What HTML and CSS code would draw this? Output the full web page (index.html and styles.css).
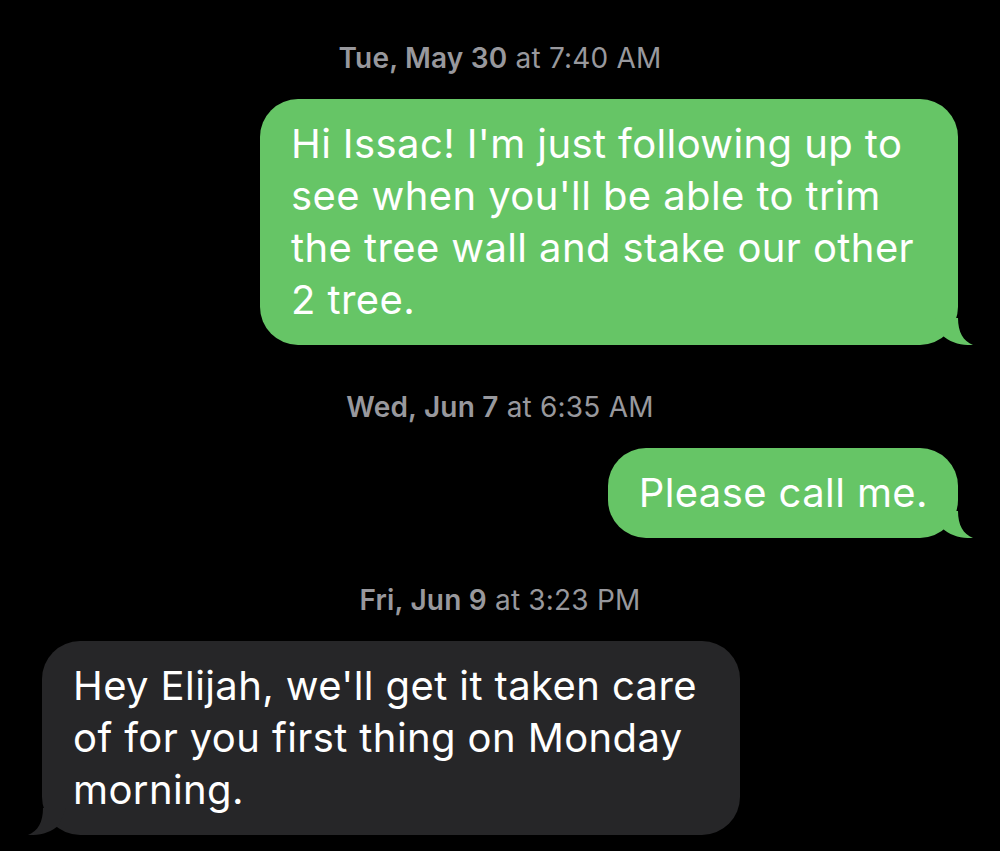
FILE: index.html
```html
<!DOCTYPE html>
<html lang="en">
<head>
    <meta charset="UTF-8">
    <title>Messages</title>
    <link rel="stylesheet" href="styles.css">
</head>
<body>

    <div class="chat">

        <div class="stamp"><b>Tue, May 30</b> at 7:40 AM</div>
        <div class="bubble sent wide">
            Hi Issac! I'm just following up to<br>
            see when you'll be able to trim<br>
            the tree wall and stake our other<br>
            2 tree.
            <svg class="tail" viewBox="0 0 39 27"><path d="M24 0 C24 14 29 23 39 27 C28 27.5 16 25 8 17 L1 0 Z"/></svg>
        </div>

        <div class="stamp"><b>Wed, Jun 7</b> at 6:35 AM</div>
        <div class="bubble sent">
            Please call me.
            <svg class="tail" viewBox="0 0 39 27"><path d="M24 0 C24 14 29 23 39 27 C28 27.5 16 25 8 17 L1 0 Z"/></svg>
        </div>

        <div class="stamp"><b>Fri, Jun 9</b> at 3:23 PM</div>
        <div class="bubble received wide">
            Hey Elijah, we'll get it taken care<br>
            of for you first thing on Monday<br>
            morning.
            <svg class="tail" viewBox="0 0 39 27"><path d="M24 0 C24 14 29 23 39 27 C28 27.5 16 25 8 17 L1 0 Z"/></svg>
        </div>

    </div>

</body>
</html>
```
FILE: styles.css
```css
* {
    margin: 0;
    padding: 0;
    box-sizing: border-box;
}

body {
    background: #000;
    font-family: Inter, "Liberation Sans", sans-serif;
    color: #fff;
}

.chat {
    display: flex;
    flex-direction: column;
    padding: 42px 42px 0 42px;
}

.stamp {
    align-self: center;
    font-size: 28px;
    line-height: 32px;
    letter-spacing: 0.2px;
    color: #98989d;
    margin: 46px 0 25px;
}

.stamp:first-child {
    margin-top: 0;
}

.stamp b {
    font-weight: 600;
}

.bubble {
    position: relative;
    font-size: 40px;
    line-height: 52px;
    letter-spacing: 0.4px;
    padding: 19px 30px 19px 31px;
    border-radius: 38px;
}

.wide {
    width: 698px;
}

.sent {
    align-self: flex-end;
    background: #66c566;
    fill: #66c566;
}

.received {
    align-self: flex-start;
    background: #262628;
    fill: #262628;
}

.tail {
    position: absolute;
    bottom: 0;
    width: 39px;
    height: 27px;
}

.sent .tail {
    right: -15px;
}

.received .tail {
    left: -14px;
    transform: scaleX(-1);
}
```
